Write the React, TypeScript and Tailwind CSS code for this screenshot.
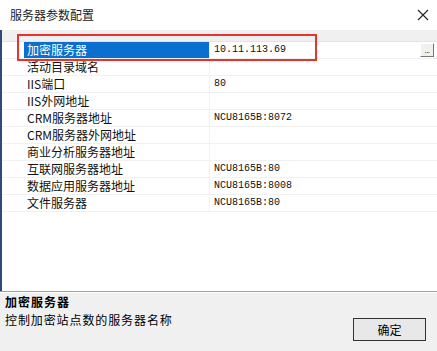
import React from 'react';

const rows: { label: string; value: string }[] = [
  { label: '加密服务器', value: '10.11.113.69' },
  { label: '活动目录域名', value: '' },
  { label: 'IIS端口', value: '80' },
  { label: 'IIS外网地址', value: '' },
  { label: 'CRM服务器地址', value: 'NCU8165B:8072' },
  { label: 'CRM服务器外网地址', value: '' },
  { label: '商业分析服务器地址', value: '' },
  { label: '互联网服务器地址', value: 'NCU8165B:80' },
  { label: '数据应用服务器地址', value: 'NCU8165B:8008' },
  { label: '文件服务器', value: 'NCU8165B:80' },
];

const cjk = "font-['SimSun','Noto_Sans_CJK_SC',sans-serif]";

export default function App() {
  return (
    <div className={`relative w-[437px] h-[351px] overflow-hidden bg-white text-black ${cjk}`}>
      {/* Title bar */}
      <div className="flex items-center justify-between h-[30px] pl-[10px] pr-[7px] bg-white">
        <span className="text-[12px] leading-none text-[#222]">服务器参数配置</span>
        <svg width="12" height="12" viewBox="0 0 12 12" className="mr-[1px]">
          <path d="M1 1 L11 11 M11 1 L1 11" stroke="#222" strokeWidth="1.1" />
        </svg>
      </div>

      {/* Grid area */}
      <div className="flex flex-col h-[261px] border-l-2 border-[#2c4a7a]">
        <div className="h-[12px] bg-[#f0f0f0] border-b border-[#e3e3e3]" />
        <div className="flex-1 bg-white">
          {rows.map((r, i) => (
            <div key={r.label} className="flex h-[17px] border-b border-[#f1f1f1]">
              <div className="w-[22px] shrink-0" />
              <div
                className={`w-[186px] shrink-0 flex items-center pl-[3px] text-[12px] leading-none border-r border-[#f1f1f1] ${
                  i === 0 ? 'bg-[#0a6fcf] text-white' : 'text-[#111]'
                }`}
              >
                {r.label}
              </div>
              <div className="flex-1 flex items-center justify-between pl-[4px] pr-[3px]">
                <span className="font-['Liberation_Mono',monospace] text-[10px] leading-none text-[#111]">
                  {r.value}
                </span>
                {i === 0 && (
                  <div className="w-[14px] h-[14px] bg-[#f0f0f0] border border-t-white border-l-white border-b-[#777] border-r-[#777] flex items-end justify-center pb-[1px]">
                    <span className="text-[8px] leading-none tracking-[-0.5px] font-['Liberation_Sans',sans-serif]">...</span>
                  </div>
                )}
              </div>
            </div>
          ))}
        </div>
      </div>

      {/* Splitter */}
      <div className="h-[2px] border-t border-[#a0a0a0] bg-white" />

      {/* Description pane */}
      <div className="relative h-[58px] bg-[#f0f0f0] px-[5px] pt-0">
        <div className="text-[12px] leading-[18px] tracking-[1px] font-bold">加密服务器</div>
        <div className="text-[12px] leading-[18px] tracking-[0.9px]">控制加密站点数的服务器名称</div>
        <div className="absolute left-[353px] top-[25px] w-[73px] h-[23px] border border-[#333] bg-[#e8e8e8] flex items-center justify-center">
          <span className="text-[12px] leading-none">确定</span>
        </div>
      </div>

      {/* Red annotation box */}
      <div className="absolute left-[17px] top-[34px] w-[300px] h-[27px] border-2 border-[#e8322f] pointer-events-none" />
    </div>
  );
}
